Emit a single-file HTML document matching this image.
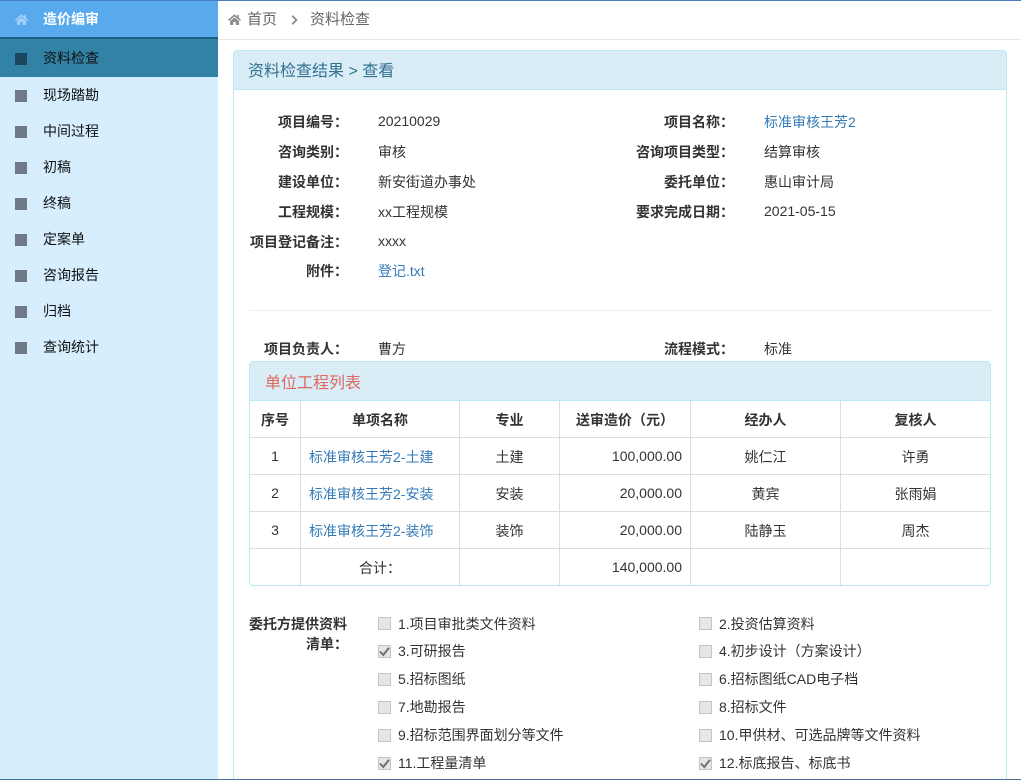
<!DOCTYPE html>
<html lang="zh"><head><meta charset="utf-8"><title>资料检查</title>
<style>
html,body{margin:0;padding:0;width:1021px;height:780px;overflow:hidden;background:#fff}
body{position:relative;font:14px/20px "Liberation Sans","WenQuanYi Zen Hei","Noto Sans CJK SC",sans-serif;color:#333}
div,a,b{position:absolute;white-space:nowrap}
a{color:#337ab7;text-decoration:none}
.r{text-align:right}.c{text-align:center}
.mi{left:43px;color:#111}
.sq{left:15px;width:12px;height:12px;background:#6e7a88}
.lb{font-weight:bold;text-align:right;width:120px;color:#333}
.vl{color:#333}
.h{background:#ddd}.v{background:#ddd;top:401px;width:1px;height:184px}
.cb{width:11px;height:11px;background:#e6e6e6;border:1px solid #c4c4c4}
.cb svg{position:absolute;left:0;top:0}
.t{color:#333}
</style></head><body>
<div style="left:0;top:0;width:1021px;height:1px;background:#4a7cc4;z-index:5"></div>
<div style="left:0;top:779px;width:1021px;height:1px;background:#4a74a8;z-index:5"></div>
<div style="left:0;top:1px;width:218px;height:778px;background:#d7eeff"></div>
<div style="left:0;top:1px;width:218px;height:36px;background:#58a9ee"></div>
<div style="left:0;top:37px;width:218px;height:2px;background:#1c6080"></div>
<div style="left:0;top:39px;width:218px;height:38px;background:#3182a5"></div>
<svg style="position:absolute;left:15px;top:14px" width="13" height="11" viewBox="0 0 13 11"><path d="M6.500 .3L0 5.800L1 7L6.500 2.400L12 7L13 5.800L10.800 3.900V.8H9.200V2.600ZM6.500 3.400L2 7.100V11H5.200V8H7.800V11H11V7.100Z" fill="#a9d3f6"/></svg>
<b style="left:43px;top:9px;color:#fff">造价编审</b>
<div class="sq" style="top:53px;background:#1c465f"></div><div class="mi" style="top:48px">资料检查</div>
<div class="sq" style="top:90px"></div><div class="mi" style="top:85px">现场踏勘</div>
<div class="sq" style="top:126px"></div><div class="mi" style="top:121px">中间过程</div>
<div class="sq" style="top:162px"></div><div class="mi" style="top:157px">初稿</div>
<div class="sq" style="top:198px"></div><div class="mi" style="top:193px">终稿</div>
<div class="sq" style="top:234px"></div><div class="mi" style="top:229px">定案单</div>
<div class="sq" style="top:270px"></div><div class="mi" style="top:265px">咨询报告</div>
<div class="sq" style="top:306px"></div><div class="mi" style="top:301px">归档</div>
<div class="sq" style="top:342px"></div><div class="mi" style="top:337px">查询统计</div>

<svg style="position:absolute;left:228px;top:14px" width="13" height="11" viewBox="0 0 13 11"><path d="M6.500 .3L0 5.800L1 7L6.500 2.400L12 7L13 5.800L10.800 3.900V.8H9.200V2.600ZM6.500 3.400L2 7.100V11H5.200V8H7.800V11H11V7.100Z" fill="#8f8f8f"/></svg>
<div style="left:247px;top:10px;color:#666;font-size:15px">首页</div>
<svg style="position:absolute;left:291px;top:15px" width="7" height="10" viewBox="0 0 7 10"><path d="M1.200 .7L5.400 5L1.200 9.300" fill="none" stroke="#8a8a8a" stroke-width="1.800"/></svg>
<div style="left:310px;top:10px;color:#666;font-size:15px">资料检查</div>
<div style="left:218px;top:39px;width:803px;height:1px;background:#e6e6e6"></div>

<div style="left:233px;top:50px;width:772px;height:740px;border:1px solid #bce8f1;border-radius:4px;background:#fff"></div>
<div style="left:234px;top:51px;width:772px;height:38px;background:#d9edf7;border-bottom:1px solid #bce8f1;border-radius:3px 3px 0 0"></div>
<div style="left:248px;top:62px;font-size:16px;color:#31708f">资料检查结果 &gt; 查看</div>

<div class="lb" style="left:228px;top:112px">项目编号：</div><div class="vl" style="left:378px;top:111px">20210029</div>
<div class="lb" style="left:614px;top:112px">项目名称：</div><a style="left:764px;top:112px">标准审核王芳2</a>
<div class="lb" style="left:228px;top:142px">咨询类别：</div><div class="vl" style="left:378px;top:142px">审核</div>
<div class="lb" style="left:614px;top:142px">咨询项目类型：</div><div class="vl" style="left:764px;top:142px">结算审核</div>
<div class="lb" style="left:228px;top:172px">建设单位：</div><div class="vl" style="left:378px;top:172px">新安街道办事处</div>
<div class="lb" style="left:614px;top:172px">委托单位：</div><div class="vl" style="left:764px;top:172px">惠山审计局</div>
<div class="lb" style="left:228px;top:202px">工程规模：</div><div class="vl" style="left:378px;top:202px">xx工程规模</div>
<div class="lb" style="left:614px;top:202px">要求完成日期：</div><div class="vl" style="left:764px;top:201px">2021-05-15</div>
<div class="lb" style="left:228px;top:232px">项目登记备注：</div><div class="vl" style="left:378px;top:231px">xxxx</div>
<div class="lb" style="left:228px;top:261px">附件：</div><a style="left:378px;top:261px">登记.txt</a>
<div style="left:249px;top:310px;width:743px;height:1px;background:#eee"></div>
<div class="lb" style="left:228px;top:339px">项目负责人：</div><div class="vl" style="left:378px;top:339px">曹方</div>
<div class="lb" style="left:614px;top:339px">流程模式：</div><div class="vl" style="left:764px;top:339px">标准</div>

<div style="left:249px;top:361px;width:740px;height:223px;border:1px solid #bce8f1;border-radius:4px;background:#fff"></div>
<div style="left:250px;top:362px;width:740px;height:38px;background:#d9edf7;border-bottom:1px solid #bce8f1;border-radius:3px 3px 0 0"></div>
<div style="left:265px;top:374px;font-size:16px;color:#e0675f">单位工程列表</div>
<div class="v" style="left:300px"></div><div class="v" style="left:459px"></div><div class="v" style="left:559px"></div><div class="v" style="left:690px"></div><div class="v" style="left:840px"></div>
<div class="h" style="left:250px;top:437px;width:740px;height:1px"></div>
<div class="h" style="left:250px;top:474px;width:740px;height:1px"></div>
<div class="h" style="left:250px;top:511px;width:740px;height:1px"></div>
<div class="h" style="left:250px;top:548px;width:740px;height:1px"></div>

<b class="c" style="left:250px;width:50px;top:410px">序号</b>
<b class="c" style="left:301px;width:158px;top:410px">单项名称</b>
<b class="c" style="left:460px;width:99px;top:410px">专业</b>
<b class="c" style="left:560px;width:130px;top:410px">送审造价（元）</b>
<b class="c" style="left:691px;width:149px;top:410px">经办人</b>
<b class="c" style="left:841px;width:149px;top:410px">复核人</b>

<div class="c" style="left:250px;width:50px;top:446px">1</div><a style="left:309px;top:447px">标准审核王芳2-土建</a><div class="c" style="left:460px;width:99px;top:447px">土建</div><div class="r" style="left:560px;width:122px;top:446px">100,000.00</div><div class="c" style="left:691px;width:149px;top:447px">姚仁江</div><div class="c" style="left:841px;width:149px;top:447px">许勇</div>
<div class="c" style="left:250px;width:50px;top:483px">2</div><a style="left:309px;top:484px">标准审核王芳2-安装</a><div class="c" style="left:460px;width:99px;top:484px">安装</div><div class="r" style="left:560px;width:122px;top:483px">20,000.00</div><div class="c" style="left:691px;width:149px;top:484px">黄宾</div><div class="c" style="left:841px;width:149px;top:484px">张雨娟</div>
<div class="c" style="left:250px;width:50px;top:520px">3</div><a style="left:309px;top:521px">标准审核王芳2-装饰</a><div class="c" style="left:460px;width:99px;top:521px">装饰</div><div class="r" style="left:560px;width:122px;top:520px">20,000.00</div><div class="c" style="left:691px;width:149px;top:521px">陆静玉</div><div class="c" style="left:841px;width:149px;top:521px">周杰</div>
<div style="left:359px;top:558px">合计：</div><div class="r" style="left:560px;width:122px;top:557px">140,000.00</div>

<b style="left:249px;top:614px;color:#333">委托方提供资料</b>
<b style="left:306px;top:634px;color:#333">清单：</b>

<div class="cb" style="left:378px;top:617px"></div><div class="t" style="left:398px;top:614px">1.项目审批类文件资料</div>
<div class="cb" style="left:699px;top:617px"></div><div class="t" style="left:719px;top:614px">2.投资估算资料</div>
<div class="cb" style="left:378px;top:645px"><svg width="11" height="11" viewBox="0 0 11 11"><path d="M1 5.500L4.300 9L10 1.800" fill="none" stroke="#707070" stroke-width="2"/></svg></div><div class="t" style="left:398px;top:641px">3.可研报告</div>
<div class="cb" style="left:699px;top:645px"></div><div class="t" style="left:719px;top:641px">4.初步设计（方案设计）</div>
<div class="cb" style="left:378px;top:673px"></div><div class="t" style="left:398px;top:669px">5.招标图纸</div>
<div class="cb" style="left:699px;top:673px"></div><div class="t" style="left:719px;top:669px">6.招标图纸CAD电子档</div>
<div class="cb" style="left:378px;top:701px"></div><div class="t" style="left:398px;top:697px">7.地勘报告</div>
<div class="cb" style="left:699px;top:701px"></div><div class="t" style="left:719px;top:697px">8.招标文件</div>
<div class="cb" style="left:378px;top:729px"></div><div class="t" style="left:398px;top:725px">9.招标范围界面划分等文件</div>
<div class="cb" style="left:699px;top:729px"></div><div class="t" style="left:719px;top:725px">10.甲供材、可选品牌等文件资料</div>
<div class="cb" style="left:378px;top:757px"><svg width="11" height="11" viewBox="0 0 11 11"><path d="M1 5.500L4.300 9L10 1.800" fill="none" stroke="#707070" stroke-width="2"/></svg></div><div class="t" style="left:398px;top:753px">11.工程量清单</div>
<div class="cb" style="left:699px;top:757px"><svg width="11" height="11" viewBox="0 0 11 11"><path d="M1 5.500L4.300 9L10 1.800" fill="none" stroke="#707070" stroke-width="2"/></svg></div><div class="t" style="left:719px;top:753px">12.标底报告、标底书</div>
</body></html>
